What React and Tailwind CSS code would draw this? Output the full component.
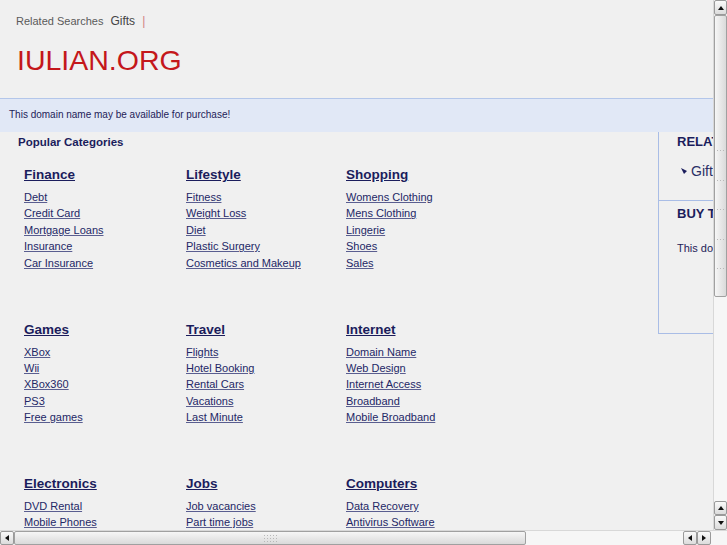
import React from "react";

const font = { fontFamily: '"Liberation Sans", Arial, sans-serif' };

const blocks = [
  [
    { title: "Finance", items: ["Debt", "Credit Card", "Mortgage Loans", "Insurance", "Car Insurance"] },
    { title: "Lifestyle", items: ["Fitness", "Weight Loss", "Diet", "Plastic Surgery", "Cosmetics and Makeup"] },
    { title: "Shopping", items: ["Womens Clothing", "Mens Clothing", "Lingerie", "Shoes", "Sales"] },
  ],
  [
    { title: "Games", items: ["XBox", "Wii", "XBox360", "PS3", "Free games"] },
    { title: "Travel", items: ["Flights", "Hotel Booking", "Rental Cars", "Vacations", "Last Minute"] },
    { title: "Internet", items: ["Domain Name", "Web Design", "Internet Access", "Broadband", "Mobile Broadband"] },
  ],
  [
    { title: "Electronics", items: ["DVD Rental", "Mobile Phones"] },
    { title: "Jobs", items: ["Job vacancies", "Part time jobs"] },
    { title: "Computers", items: ["Data Recovery", "Antivirus Software"] },
  ],
];

function Arrow({ dir }) {
  const pts = {
    up: "1,6 4,2 7,6",
    down: "1,2 4,6 7,2",
    left: "6,1 2,4 6,7",
    right: "2,1 6,4 2,7",
  }[dir];
  return (
    <svg width="8" height="8" viewBox="0 0 8 8">
      <polygon points={pts} fill="#111" />
    </svg>
  );
}

function SbButton({ dir, className = "" }) {
  return (
    <div
      className={`flex items-center justify-center border border-[#9a9a9a] rounded-[2px] bg-gradient-to-b from-[#fafafa] to-[#dcdcdc] ${className}`}
    >
      <Arrow dir={dir} />
    </div>
  );
}

function Grip({ vertical }) {
  return (
    <div className={`grid ${vertical ? "grid-cols-3" : "grid-cols-5"} gap-[2px]`}>
      {Array.from({ length: 15 }).map((_, i) => (
        <div key={i} className="w-[1px] h-[1px] bg-[#b8b8b8]" />
      ))}
    </div>
  );
}

function Category({ title, items }) {
  return (
    <div>
      <a href="#" className="block w-fit text-[13.5px] font-bold leading-[18px] underline text-[#1b1d5c]">
        {title}
      </a>
      <ul className="mt-[5px] text-[11px] leading-[16.4px]">
        {items.map((it) => (
          <li key={it}>
            <a href="#" className="underline text-[#232766] decoration-[#5a5e90]">
              {it}
            </a>
          </li>
        ))}
      </ul>
    </div>
  );
}

export default function App() {
  return (
    <div className="w-[727px] h-[545px] flex flex-col overflow-hidden bg-[#f0f0f0]" style={font}>
      <div className="flex flex-1 min-h-0">
        {/* page viewport */}
        <div className="flex-1 min-w-0 overflow-hidden">
          <div className="w-[900px]">
            {/* header */}
            <div className="pl-[16px] pt-[14px] flex items-center leading-[14px]">
              <span className="text-[11px] text-[#5a5a5a]">Related Searches</span>
              <span className="ml-[7px] text-[12px] text-[#444]">Gifts</span>
              <span className="ml-[7px] text-[12px] text-[#d08080]">|</span>
            </div>
            <div className="pl-[17px] mt-[16px] text-[28.5px] leading-[32px] text-[#c4171b]">IULIAN.ORG</div>
            <div className="h-[22px]" />
            <div className="h-[34px] border-t border-[#b3c6ea] bg-[#e1e8f6] flex items-center pl-[9px] pb-[2px]">
              <span className="text-[10px] leading-[12px] text-[#1e2258]">This domain name may be available for purchase!</span>
            </div>

            <div className="flex">
              {/* main column */}
              <div className="w-[658px] shrink-0 pt-[3px]">
                <div className="pl-[18px] text-[11.5px] font-bold leading-[14px] text-[#1b1d5c]">Popular Categories</div>
                <div className="mt-[17px] pl-[24px]">
                  {blocks.map((row, i) => (
                    <div key={i} className="grid grid-cols-[162px_160px_160px] h-[154.5px]">
                      {row.map((c) => (
                        <Category key={c.title} {...c} />
                      ))}
                    </div>
                  ))}
                </div>
              </div>

              {/* right panel */}
              <div className="w-[240px] shrink-0 self-start h-[202px] border-l border-b border-[#a9bde6] flex flex-col">
                <div className="h-[69px] border-b border-[#a9bde6] pl-[18px] pt-[3px]">
                  <div className="text-[13px] font-bold leading-[14px] text-[#1b1d5c]">RELATED SEARCHES</div>
                  <div className="mt-[14px] flex items-center gap-[4px] pl-[4px]">
                    <svg width="6" height="6" viewBox="0 0 6 6">
                      <polygon points="0,0 6,3 3,6" fill="#1b1d5c" />
                    </svg>
                    <span className="text-[14px] leading-[16px] text-[#2a2f66]">Gifts</span>
                  </div>
                </div>
                <div className="pl-[18px] pt-[6px]">
                  <div className="text-[13px] font-bold leading-[14px] text-[#1b1d5c]">BUY THIS DOMAIN</div>
                  <div className="mt-[20px] text-[11px] leading-[14px] text-[#1e2258]">
                    This domain may be for sale.
                  </div>
                </div>
              </div>
            </div>
          </div>
        </div>

        {/* vertical scrollbar */}
        <div className="w-[14px] shrink-0 flex flex-col bg-[#f4f4f4] border-l border-[#d8d8d8]">
          <SbButton dir="up" className="h-[15px]" />
          <div className="h-[282px] border border-[#a0a0a0] rounded-[2px] bg-gradient-to-r from-[#f6f6f6] to-[#dadada] flex justify-center pt-[134px]">
            <Grip vertical />
          </div>
          <div className="flex-1 bg-[#f6f6f6]" />
          <SbButton dir="up" className="h-[14px]" />
          <SbButton dir="down" className="h-[15px]" />
        </div>
      </div>

      {/* horizontal scrollbar */}
      <div className="h-[15px] flex shrink-0 bg-[#f4f4f4] border-t border-[#d8d8d8]">
        <SbButton dir="left" className="w-[14px]" />
        <div className="w-[512px] border border-[#a0a0a0] rounded-[2px] bg-gradient-to-b from-[#f6f6f6] to-[#dadada] flex items-center justify-center">
          <Grip />
        </div>
        <div className="w-[157px] bg-[#f6f6f6]" />
        <SbButton dir="left" className="w-[14px]" />
        <SbButton dir="right" className="w-[14px]" />
        <div className="flex-1 bg-[#f6f6f6]" />
      </div>
    </div>
  );
}
